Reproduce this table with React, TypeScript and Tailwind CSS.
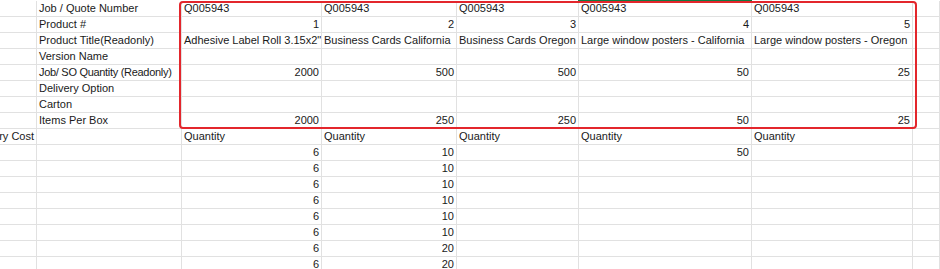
type Align = 'l' | 'r'
type Cell = { t: string; a?: Align; tight?: boolean }

const COLS = 8

const headerRows: Cell[][] = [
  [{ t: '' }, { t: 'Job / Quote Number' }, { t: 'Q005943' }, { t: 'Q005943' }, { t: 'Q005943' }, { t: 'Q005943' }, { t: 'Q005943' }],
  [{ t: '' }, { t: 'Product #' }, { t: '1', a: 'r' }, { t: '2', a: 'r' }, { t: '3', a: 'r' }, { t: '4', a: 'r' }, { t: '5', a: 'r' }],
  [
    { t: '' },
    { t: 'Product Title(Readonly)' },
    { t: 'Adhesive Label Roll 3.15x2"' },
    { t: 'Business Cards California' },
    { t: 'Business Cards Oregon' },
    { t: 'Large window posters - California' },
    { t: 'Large window posters - Oregon' },
  ],
  [{ t: '' }, { t: 'Version Name' }],
  [
    { t: '' },
    { t: 'Job/ SO Quantity (Readonly)', tight: true },
    { t: '2000', a: 'r' },
    { t: '500', a: 'r' },
    { t: '500', a: 'r' },
    { t: '50', a: 'r' },
    { t: '25', a: 'r' },
  ],
  [{ t: '' }, { t: 'Delivery Option' }],
  [{ t: '' }, { t: 'Carton' }],
  [{ t: '' }, { t: 'Items Per Box' }, { t: '2000', a: 'r' }, { t: '250', a: 'r' }, { t: '250', a: 'r' }, { t: '50', a: 'r' }, { t: '25', a: 'r' }],
  // first column is scrolled, only the tail of its label shows
  [{ t: 'ry Cost', a: 'r' }, { t: '' }, { t: 'Quantity' }, { t: 'Quantity' }, { t: 'Quantity' }, { t: 'Quantity' }, { t: 'Quantity' }],
]

const qty = ['10', '10', '10', '10', '10', '10', '20', '20']

const rows: Cell[][] = [
  ...headerRows,
  ...qty.map((q, i) => [
    { t: '' },
    { t: '' },
    { t: '6', a: 'r' as Align },
    { t: q, a: 'r' as Align },
    { t: '' },
    { t: i === 0 ? '50' : '', a: 'r' as Align },
    { t: '' },
  ]),
]

function GridCell({ cell }: { cell?: Cell }) {
  const right = cell?.a === 'r'
  return (
    <div
      className={`h-4 border-r border-b border-[#e1e1e1] overflow-hidden whitespace-nowrap flex ${right ? 'justify-end pr-[2px] pl-0' : 'justify-start px-[2px]'}`}
    >
      <span className={`leading-[15px] shrink-0 ${cell?.tight ? 'tracking-[-0.3px]' : ''}`}>{cell?.t ?? ''}</span>
    </div>
  )
}

export default function App() {
  return (
    <div className="relative w-[940px] h-[269px] overflow-hidden bg-white pt-px text-[11px] text-[#1a1a1a] font-['Liberation_Sans',Arial,sans-serif]">
      <div className="grid grid-cols-[37px_145px_140px_135px_122px_173px_161px_1fr]">
        {rows.map((row, r) =>
          Array.from({ length: COLS }).map((_, c) => <GridCell key={`${r}-${c}`} cell={row[c]} />)
        )}
      </div>

      {/* selected column marker */}
      <div className="absolute left-[578px] top-0 w-[174px] h-px bg-[#107c41]" />

      {/* highlight box */}
      <div className="absolute left-[179px] top-px w-[738px] h-[128px] border-2 border-[#e3262c] rounded-[4px]" />
    </div>
  )
}
